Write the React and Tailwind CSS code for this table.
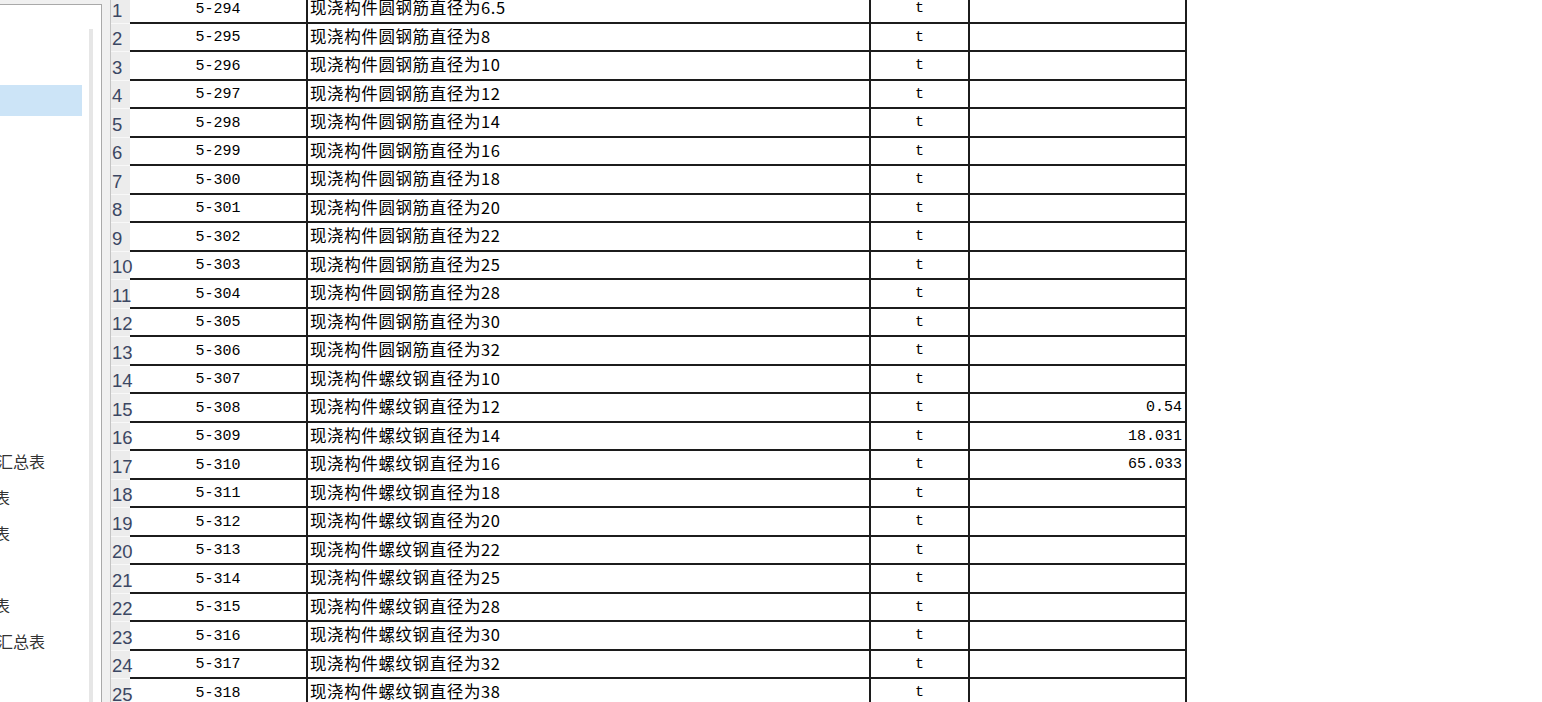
import React from 'react';

const rows = [
    ['5-294', '现浇构件圆钢筋直径为6.5', ''],
    ['5-295', '现浇构件圆钢筋直径为8', ''],
    ['5-296', '现浇构件圆钢筋直径为10', ''],
    ['5-297', '现浇构件圆钢筋直径为12', ''],
    ['5-298', '现浇构件圆钢筋直径为14', ''],
    ['5-299', '现浇构件圆钢筋直径为16', ''],
    ['5-300', '现浇构件圆钢筋直径为18', ''],
    ['5-301', '现浇构件圆钢筋直径为20', ''],
    ['5-302', '现浇构件圆钢筋直径为22', ''],
    ['5-303', '现浇构件圆钢筋直径为25', ''],
    ['5-304', '现浇构件圆钢筋直径为28', ''],
    ['5-305', '现浇构件圆钢筋直径为30', ''],
    ['5-306', '现浇构件圆钢筋直径为32', ''],
    ['5-307', '现浇构件螺纹钢直径为10', ''],
    ['5-308', '现浇构件螺纹钢直径为12', '0.54'],
    ['5-309', '现浇构件螺纹钢直径为14', '18.031'],
    ['5-310', '现浇构件螺纹钢直径为16', '65.033'],
    ['5-311', '现浇构件螺纹钢直径为18', ''],
    ['5-312', '现浇构件螺纹钢直径为20', ''],
    ['5-313', '现浇构件螺纹钢直径为22', ''],
    ['5-314', '现浇构件螺纹钢直径为25', ''],
    ['5-315', '现浇构件螺纹钢直径为28', ''],
    ['5-316', '现浇构件螺纹钢直径为30', ''],
    ['5-317', '现浇构件螺纹钢直径为32', ''],
    ['5-318', '现浇构件螺纹钢直径为38', ''],
];

// left tree items, text is scrolled off to the left so only the tail shows
const navItems = [
    { text: '' },
    { text: '' },
    { text: '', sel: true },
    { text: '' },
    { text: '' },
    { text: '' },
    { text: '' },
    { text: '' },
    { text: '' },
    { text: '' },
    { text: '' },
    { text: '' },
    { text: '钢筋汇总表', tail: 'long' },
    { text: '钢筋表', tail: 'short' },
    { text: '钢筋表', tail: 'short' },
    { text: '' },
    { text: '钢筋表', tail: 'short' },
    { text: '钢筋汇总表', tail: 'long' },
    { text: '' },
];

const App = () => {
    return (
        <div className="h-[702px] w-[1542px] overflow-hidden bg-white flex">
            {/* left tree panel */}
            <div className="w-[110px] shrink-0 bg-[#f0f0f0] flex">
                <div className="w-[102px] mt-[4px] bg-white border-t border-r border-[#a9a9a9] flex">
                    <div className="w-[88px] pt-[5.5px] overflow-hidden" style={{ fontFamily: '"Noto Sans CJK SC", sans-serif' }}>
                        {navItems.map((item, i) => (
                            <div key={i} className="h-[36px] flex items-center">
                                {item.sel ? (
                                    <div className="h-[31px] w-[82px] bg-[#cce4f7]" />
                                ) : item.text ? (
                                    <div className={`whitespace-nowrap text-[16px] leading-none text-[#333] ${item.tail === 'long' ? '-ml-[35px]' : '-ml-[38px]'}`}>
                                        {item.text}
                                    </div>
                                ) : null}
                            </div>
                        ))}
                    </div>
                    <div className="flex-1 pt-[24px] pl-[1px]">
                        <div className="w-[4px] h-full bg-[#e6e6e6]" />
                    </div>
                </div>
            </div>

            {/* grid */}
            <div className="flex-1 -mt-[5px] border-l border-[#c4c4c4]">
                {rows.map((r, i) => (
                    <div key={i} className="flex h-[28.5px]">
                        <div className="w-[19px] shrink-0 bg-[#ececec] border-b border-[#f8f8f8] flex items-center pl-[1px] text-[18.5px] text-[#3b4763] relative z-10" style={{ fontFamily: '"Liberation Sans", sans-serif' }}>
                            <span className="leading-none mt-[4px] whitespace-nowrap">{i + 1}</span>
                        </div>
                        <div className="grid grid-cols-[176px_563px_99px_219px] border-b-2 border-[#1c1c1c]">
                            <div className="flex items-center justify-center pt-[2px] text-[15px] text-black" style={{ fontFamily: '"Liberation Mono", monospace' }}>
                                {r[0]}
                            </div>
                            <div className="border-l-2 border-[#1c1c1c] flex items-center pl-[2px] pb-[3px] text-[16.5px] tracking-[0.6px] text-black" style={{ fontFamily: '"Noto Sans CJK SC", sans-serif' }}>
                                {r[1]}
                            </div>
                            <div className="border-l-2 border-[#1c1c1c] flex items-center justify-center pt-[1px] text-[15px] text-black" style={{ fontFamily: '"Liberation Mono", monospace' }}>
                                t
                            </div>
                            <div className="border-l-2 border-r-2 border-[#1c1c1c] flex items-center justify-end pr-[3px] pt-[1px] text-[15px] text-black" style={{ fontFamily: '"Liberation Mono", monospace' }}>
                                {r[2]}
                            </div>
                        </div>
                    </div>
                ))}
            </div>
        </div>
    );
};

export default App;
